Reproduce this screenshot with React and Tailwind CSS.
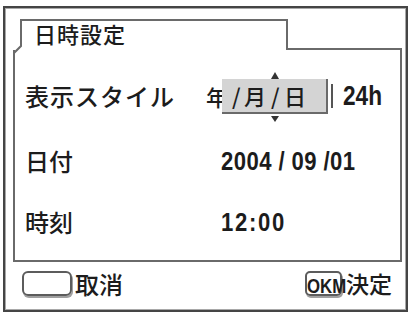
export default function App() {
  const line = "border-[#6a6a6a]";
  const num = "font-['Liberation_Sans','Arial',sans-serif] font-bold leading-none inline-block origin-left";
  return (
    <div className="w-[412px] h-[314px] bg-white pt-[6px] pl-[3px] font-['Noto_Sans_CJK_JP','Noto_Sans',sans-serif] font-medium text-[#1c1c1c]">
      <div className="w-[405px] h-[306px] border-2 border-[#454545] shadow-[inset_0_0_0_1px_#a8a8a8]">
        <div className="relative ml-[8px] mt-[11px] w-[389px]">
          <div className="flex h-[31px]">
            <div className={`ml-[7px] w-[268px] border-t-2 border-x-2 ${line} pl-[12px] pt-[1px]`}>
              <span className="block text-[22px] leading-none tracking-[1px]">日時設定</span>
            </div>
            <div className={`flex-1 border-b-2 ${line}`} />
          </div>
          <svg className="absolute left-0 top-[24px]" width="12" height="12" viewBox="0 0 12 12">
            <rect x="6.5" y="2" width="4" height="8" fill="#fff" />
            <path d="M8 1 L8 3 L1 10 L1 12" fill="none" stroke="#6a6a6a" strokeWidth="2" />
          </svg>
          <div className={`h-[212px] border-x-2 border-b-2 ${line} pl-[10px] pt-[26px]`}>
            <div className="flex h-[40px] items-center">
              <div className="w-[181px] text-[24px] leading-none tracking-[1px]">表示スタイル</div>
              <span className="w-[16px] text-[22px] leading-none">年</span>
              <div className="relative flex h-[35px] w-[106px] items-center bg-[#d4d4d4] border-r-2 border-b-2 border-[#6a6a6a] pl-[10px] text-[22px] leading-none">
                <span className="w-[12px]">/</span>
                <span className="w-[27px]">月</span>
                <span className="w-[13px]">/</span>
                <span>日</span>
                <div className="absolute left-[49px] top-[-7px] h-0 w-0 border-x-[4px] border-b-[7px] border-x-transparent border-b-[#333]" />
                <div className="absolute left-[49px] top-[37px] h-0 w-0 border-x-[4px] border-t-[6px] border-x-transparent border-t-[#333]" />
              </div>
              <div className="ml-[3px] h-[24px] w-[2px] bg-[#555]" />
              <span className={`ml-[10px] text-[27px] scale-x-[0.84] ${num}`}>24h</span>
            </div>
            <div className="mt-[25px] flex h-[40px] items-center">
              <div className="w-[196px] text-[24px] leading-none">日付</div>
              <span className={`text-[26px] tracking-[0.5px] whitespace-pre scale-x-[0.85] ${num}`}>2004 / 09 /01</span>
            </div>
            <div className="mt-[21px] flex h-[40px] items-center">
              <div className="w-[196px] text-[24px] leading-none">時刻</div>
              <span className={`text-[26px] tracking-[2px] scale-x-[0.85] ${num}`}>12:00</span>
            </div>
          </div>
        </div>
        <div className="mt-[9px] flex h-[25px] items-center">
          <div className="ml-[17px] h-[25px] w-[50px] rounded-[6px] border-2 border-[#5c5c5c] shadow-[1px_2px_0_#a0a0a0]" />
          <span className="ml-[3px] text-[24px] leading-none">取消</span>
          <div className="ml-auto mr-[14px] flex items-center">
            <div className="relative h-[25px] w-[37px] rounded-[5px] border-2 border-[#5c5c5c] shadow-[1px_2px_0_#a0a0a0]">
              <span className={`absolute left-[0px] top-[2px] whitespace-nowrap text-[21px] scale-x-[0.8] ${num}`}>OKM</span>
            </div>
            <span className="ml-[4px] text-[23px] leading-none">決定</span>
          </div>
        </div>
      </div>
    </div>
  );
}
